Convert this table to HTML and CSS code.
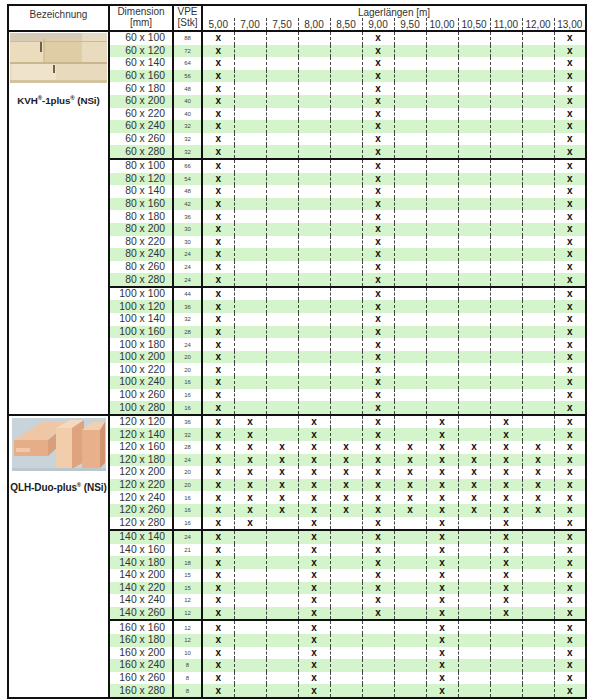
FILE: index.html
```html
<!DOCTYPE html>
<html lang="de">
<head>
<meta charset="utf-8">
<title>Lagerlängen</title>
<link rel="stylesheet" href="styles.css">
</head>
<body>
<table class="sheet">
<colgroup>
<col class="c-name"><col class="c-dim"><col class="c-vpe">
<col class="c-len"><col class="c-len"><col class="c-len"><col class="c-len"><col class="c-len"><col class="c-len">
<col class="c-len"><col class="c-len"><col class="c-len"><col class="c-len"><col class="c-len"><col class="c-len">
</colgroup>
<thead>
<tr class="h1">
<th rowspan="2" class="h-name">Bezeichnung</th>
<th rowspan="2" class="h-dim">Dimension<br>[mm]</th>
<th rowspan="2" class="h-vpe">VPE<br>[Stk]</th>
<th colspan="12" class="h-group">Lagerlängen [m]</th>
</tr>
<tr class="h2">
<th>5,00</th><th>7,00</th><th>7,50</th><th>8,00</th><th>8,50</th><th>9,00</th><th>9,50</th><th>10,00</th><th>10,50</th><th>11,00</th><th>12,00</th><th>13,00</th>
</tr>
</thead>
<tbody>
<tr>
<td rowspan="30" class="name">
<svg class="pic-kvh" width="97" height="50" viewBox="0 0 97 50">
<rect width="97" height="50" fill="#e3d7bb"/>
<rect x="0" y="0" width="97" height="8" fill="#d6ccb6"/>
<rect x="0" y="8" width="34" height="22" fill="#eadcbd"/>
<rect x="34" y="6" width="63" height="25" fill="#dfcda6"/>
<rect x="72" y="0" width="25" height="50" fill="#eee4cf" opacity="0.6"/>
<rect x="0" y="31" width="97" height="19" fill="#e8dbbd"/>
<rect x="2" y="31" width="44" height="16" fill="#efe4cb"/>
<rect x="0" y="29" width="97" height="2" fill="#c9b68f"/>
<rect x="0" y="47" width="97" height="3" fill="#d2c29f"/>
<rect x="0" y="8" width="97" height="1" fill="#cbbb98"/>
<line x1="31" y1="9" x2="31" y2="19" stroke="#3b2a12" stroke-width="1.4"/>
<line x1="44" y1="32" x2="44" y2="40" stroke="#3b2a12" stroke-width="1.4"/>
<line x1="34" y1="6" x2="34" y2="30" stroke="#c6b28b" stroke-width="1"/>
</svg>
<div class="label">KVH<sup>®</sup>-1plus<sup>®</sup> (NSi)</div>
</td>
<td class="d">60 x 100</td><td class="v">88</td><td>x</td><td></td><td></td><td></td><td></td><td>x</td><td></td><td></td><td></td><td></td><td></td><td>x</td></tr>
<tr><td class="d">60 x 120</td><td class="v">72</td><td>x</td><td></td><td></td><td></td><td></td><td>x</td><td></td><td></td><td></td><td></td><td></td><td>x</td></tr>
<tr><td class="d">60 x 140</td><td class="v">64</td><td>x</td><td></td><td></td><td></td><td></td><td>x</td><td></td><td></td><td></td><td></td><td></td><td>x</td></tr>
<tr><td class="d">60 x 160</td><td class="v">56</td><td>x</td><td></td><td></td><td></td><td></td><td>x</td><td></td><td></td><td></td><td></td><td></td><td>x</td></tr>
<tr><td class="d">60 x 180</td><td class="v">48</td><td>x</td><td></td><td></td><td></td><td></td><td>x</td><td></td><td></td><td></td><td></td><td></td><td>x</td></tr>
<tr><td class="d">60 x 200</td><td class="v">40</td><td>x</td><td></td><td></td><td></td><td></td><td>x</td><td></td><td></td><td></td><td></td><td></td><td>x</td></tr>
<tr><td class="d">60 x 220</td><td class="v">40</td><td>x</td><td></td><td></td><td></td><td></td><td>x</td><td></td><td></td><td></td><td></td><td></td><td>x</td></tr>
<tr><td class="d">60 x 240</td><td class="v">32</td><td>x</td><td></td><td></td><td></td><td></td><td>x</td><td></td><td></td><td></td><td></td><td></td><td>x</td></tr>
<tr><td class="d">60 x 260</td><td class="v">32</td><td>x</td><td></td><td></td><td></td><td></td><td>x</td><td></td><td></td><td></td><td></td><td></td><td>x</td></tr>
<tr><td class="d">60 x 280</td><td class="v">32</td><td>x</td><td></td><td></td><td></td><td></td><td>x</td><td></td><td></td><td></td><td></td><td></td><td>x</td></tr>
<tr class="gs"><td class="d">80 x 100</td><td class="v">66</td><td>x</td><td></td><td></td><td></td><td></td><td>x</td><td></td><td></td><td></td><td></td><td></td><td>x</td></tr>
<tr><td class="d">80 x 120</td><td class="v">54</td><td>x</td><td></td><td></td><td></td><td></td><td>x</td><td></td><td></td><td></td><td></td><td></td><td>x</td></tr>
<tr><td class="d">80 x 140</td><td class="v">48</td><td>x</td><td></td><td></td><td></td><td></td><td>x</td><td></td><td></td><td></td><td></td><td></td><td>x</td></tr>
<tr><td class="d">80 x 160</td><td class="v">42</td><td>x</td><td></td><td></td><td></td><td></td><td>x</td><td></td><td></td><td></td><td></td><td></td><td>x</td></tr>
<tr><td class="d">80 x 180</td><td class="v">36</td><td>x</td><td></td><td></td><td></td><td></td><td>x</td><td></td><td></td><td></td><td></td><td></td><td>x</td></tr>
<tr><td class="d">80 x 200</td><td class="v">30</td><td>x</td><td></td><td></td><td></td><td></td><td>x</td><td></td><td></td><td></td><td></td><td></td><td>x</td></tr>
<tr><td class="d">80 x 220</td><td class="v">30</td><td>x</td><td></td><td></td><td></td><td></td><td>x</td><td></td><td></td><td></td><td></td><td></td><td>x</td></tr>
<tr><td class="d">80 x 240</td><td class="v">24</td><td>x</td><td></td><td></td><td></td><td></td><td>x</td><td></td><td></td><td></td><td></td><td></td><td>x</td></tr>
<tr><td class="d">80 x 260</td><td class="v">24</td><td>x</td><td></td><td></td><td></td><td></td><td>x</td><td></td><td></td><td></td><td></td><td></td><td>x</td></tr>
<tr><td class="d">80 x 280</td><td class="v">24</td><td>x</td><td></td><td></td><td></td><td></td><td>x</td><td></td><td></td><td></td><td></td><td></td><td>x</td></tr>
<tr class="gs"><td class="d">100 x 100</td><td class="v">44</td><td>x</td><td></td><td></td><td></td><td></td><td>x</td><td></td><td></td><td></td><td></td><td></td><td>x</td></tr>
<tr><td class="d">100 x 120</td><td class="v">36</td><td>x</td><td></td><td></td><td></td><td></td><td>x</td><td></td><td></td><td></td><td></td><td></td><td>x</td></tr>
<tr><td class="d">100 x 140</td><td class="v">32</td><td>x</td><td></td><td></td><td></td><td></td><td>x</td><td></td><td></td><td></td><td></td><td></td><td>x</td></tr>
<tr><td class="d">100 x 160</td><td class="v">28</td><td>x</td><td></td><td></td><td></td><td></td><td>x</td><td></td><td></td><td></td><td></td><td></td><td>x</td></tr>
<tr><td class="d">100 x 180</td><td class="v">24</td><td>x</td><td></td><td></td><td></td><td></td><td>x</td><td></td><td></td><td></td><td></td><td></td><td>x</td></tr>
<tr><td class="d">100 x 200</td><td class="v">20</td><td>x</td><td></td><td></td><td></td><td></td><td>x</td><td></td><td></td><td></td><td></td><td></td><td>x</td></tr>
<tr><td class="d">100 x 220</td><td class="v">20</td><td>x</td><td></td><td></td><td></td><td></td><td>x</td><td></td><td></td><td></td><td></td><td></td><td>x</td></tr>
<tr><td class="d">100 x 240</td><td class="v">16</td><td>x</td><td></td><td></td><td></td><td></td><td>x</td><td></td><td></td><td></td><td></td><td></td><td>x</td></tr>
<tr><td class="d">100 x 260</td><td class="v">16</td><td>x</td><td></td><td></td><td></td><td></td><td>x</td><td></td><td></td><td></td><td></td><td></td><td>x</td></tr>
<tr><td class="d">100 x 280</td><td class="v">16</td><td>x</td><td></td><td></td><td></td><td></td><td>x</td><td></td><td></td><td></td><td></td><td></td><td>x</td></tr>
</tbody>
<tbody class="qlh">
<tr>
<td rowspan="22" class="name">
<svg class="pic-qlh" width="94" height="53" viewBox="0 0 94 53">
<rect width="94" height="53" fill="#c9d3da"/>
<polygon points="2,22 30,4 58,4 34,22" fill="#efc7a6"/>
<rect x="2" y="22" width="34" height="16" fill="#e5ad88"/>
<polygon points="36,22 58,4 58,18 36,38" fill="#d89f7b"/>
<rect x="4" y="30" width="14" height="4" fill="#f0c9a8"/>
<polygon points="44,10 58,2 72,2 60,10" fill="#f5d9be"/>
<rect x="44" y="10" width="16" height="41" fill="#f1cdac"/>
<polygon points="60,10 72,2 72,44 60,51" fill="#dfa47f"/>
<polygon points="70,12 80,4 93,4 88,12" fill="#f2cfb0"/>
<rect x="70" y="12" width="18" height="38" fill="#e8b18c"/>
<polygon points="88,12 93,4 93,45 88,50" fill="#d2936f"/>
<rect x="0" y="50" width="94" height="3" fill="#bcc6cd"/>
</svg>
<div class="label">QLH-Duo-plus<sup>®</sup> (NSi)</div>
</td>
<td class="d">120 x 120</td><td class="v">36</td><td>x</td><td>x</td><td></td><td>x</td><td></td><td>x</td><td></td><td>x</td><td></td><td>x</td><td></td><td>x</td></tr>
<tr><td class="d">120 x 140</td><td class="v">32</td><td>x</td><td>x</td><td></td><td>x</td><td></td><td>x</td><td></td><td>x</td><td></td><td>x</td><td></td><td>x</td></tr>
<tr><td class="d">120 x 160</td><td class="v">28</td><td>x</td><td>x</td><td>x</td><td>x</td><td>x</td><td>x</td><td>x</td><td>x</td><td>x</td><td>x</td><td>x</td><td>x</td></tr>
<tr><td class="d">120 x 180</td><td class="v">24</td><td>x</td><td>x</td><td>x</td><td>x</td><td>x</td><td>x</td><td>x</td><td>x</td><td>x</td><td>x</td><td>x</td><td>x</td></tr>
<tr><td class="d">120 x 200</td><td class="v">20</td><td>x</td><td>x</td><td>x</td><td>x</td><td>x</td><td>x</td><td>x</td><td>x</td><td>x</td><td>x</td><td>x</td><td>x</td></tr>
<tr><td class="d">120 x 220</td><td class="v">20</td><td>x</td><td>x</td><td>x</td><td>x</td><td>x</td><td>x</td><td>x</td><td>x</td><td>x</td><td>x</td><td>x</td><td>x</td></tr>
<tr><td class="d">120 x 240</td><td class="v">16</td><td>x</td><td>x</td><td>x</td><td>x</td><td>x</td><td>x</td><td>x</td><td>x</td><td>x</td><td>x</td><td>x</td><td>x</td></tr>
<tr><td class="d">120 x 260</td><td class="v">16</td><td>x</td><td>x</td><td>x</td><td>x</td><td>x</td><td>x</td><td>x</td><td>x</td><td>x</td><td>x</td><td>x</td><td>x</td></tr>
<tr><td class="d">120 x 280</td><td class="v">16</td><td>x</td><td>x</td><td></td><td>x</td><td></td><td>x</td><td></td><td>x</td><td></td><td>x</td><td></td><td>x</td></tr>
<tr class="gs"><td class="d">140 x 140</td><td class="v">24</td><td>x</td><td></td><td></td><td>x</td><td></td><td>x</td><td></td><td>x</td><td></td><td>x</td><td></td><td>x</td></tr>
<tr><td class="d">140 x 160</td><td class="v">21</td><td>x</td><td></td><td></td><td>x</td><td></td><td>x</td><td></td><td>x</td><td></td><td>x</td><td></td><td>x</td></tr>
<tr><td class="d">140 x 180</td><td class="v">18</td><td>x</td><td></td><td></td><td>x</td><td></td><td>x</td><td></td><td>x</td><td></td><td>x</td><td></td><td>x</td></tr>
<tr><td class="d">140 x 200</td><td class="v">15</td><td>x</td><td></td><td></td><td>x</td><td></td><td>x</td><td></td><td>x</td><td></td><td>x</td><td></td><td>x</td></tr>
<tr><td class="d">140 x 220</td><td class="v">15</td><td>x</td><td></td><td></td><td>x</td><td></td><td>x</td><td></td><td>x</td><td></td><td>x</td><td></td><td>x</td></tr>
<tr><td class="d">140 x 240</td><td class="v">12</td><td>x</td><td></td><td></td><td>x</td><td></td><td>x</td><td></td><td>x</td><td></td><td>x</td><td></td><td>x</td></tr>
<tr><td class="d">140 x 260</td><td class="v">12</td><td>x</td><td></td><td></td><td>x</td><td></td><td>x</td><td></td><td>x</td><td></td><td>x</td><td></td><td>x</td></tr>
<tr class="gs"><td class="d">160 x 160</td><td class="v">12</td><td>x</td><td></td><td></td><td>x</td><td></td><td></td><td></td><td>x</td><td></td><td></td><td></td><td>x</td></tr>
<tr><td class="d">160 x 180</td><td class="v">12</td><td>x</td><td></td><td></td><td>x</td><td></td><td></td><td></td><td>x</td><td></td><td></td><td></td><td>x</td></tr>
<tr><td class="d">160 x 200</td><td class="v">10</td><td>x</td><td></td><td></td><td>x</td><td></td><td></td><td></td><td>x</td><td></td><td></td><td></td><td>x</td></tr>
<tr><td class="d">160 x 240</td><td class="v">8</td><td>x</td><td></td><td></td><td>x</td><td></td><td></td><td></td><td>x</td><td></td><td></td><td></td><td>x</td></tr>
<tr><td class="d">160 x 260</td><td class="v">8</td><td>x</td><td></td><td></td><td>x</td><td></td><td></td><td></td><td>x</td><td></td><td></td><td></td><td>x</td></tr>
<tr><td class="d">160 x 280</td><td class="v">8</td><td>x</td><td></td><td></td><td>x</td><td></td><td></td><td></td><td>x</td><td></td><td></td><td></td><td>x</td></tr>
</tbody>
</table>
</body>
</html>
```
FILE: styles.css
```css
html, body {
  margin: 0;
  padding: 0;
  background: #fff;
}
body {
  font-family: "Liberation Sans", Arial, sans-serif;
  color: #222;
}
.sheet {
  border-collapse: collapse;
  table-layout: fixed;
  width: 579px;
  margin: 4px 0 0 7px;
  border: 2px solid #111;
}
.c-name { width: 101px; }
.c-dim { width: 64px; }
.c-vpe { width: 29px; }
.c-len { width: 32px; }

.sheet th {
  font-weight: normal;
  font-size: 10px;
  line-height: 11px;
  padding: 0;
  color: #333;
  white-space: nowrap;
}
.h-name, .h-dim, .h-vpe {
  vertical-align: top;
  padding-top: 2px;
  border-right: 2px solid #111;
  border-bottom: 2px solid #111;
}
.h-name { padding-top: 3px !important; }
.h-group {
  height: 12px;
  vertical-align: bottom;
  font-size: 9.6px;
}
.h2 th {
  height: 12px;
  vertical-align: bottom;
  border-left: 1px dashed #444;
  border-bottom: 2px solid #111;
}

.sheet td {
  padding: 0;
  height: 12.6px;
  line-height: 12px;
  text-align: center;
  font-weight: bold;
  font-size: 10px;
  color: #111;
  border-left: 1px dashed #444;
  white-space: nowrap;
}
.sheet tr:nth-child(even) td {
  background: #d4f5cc;
}
.sheet td.d {
  text-align: right;
  padding-right: 7px;
  font-weight: normal;
  font-size: 10.4px;
  color: #333;
  border-left: 2px solid #111;
  border-right: 2px solid #111;
}
.sheet td.v {
  font-weight: normal;
  font-size: 6px;
  color: #444;
  border-right: 2px solid #111;
}
.sheet tr.gs td {
  border-top: 2px solid #111;
}
.sheet tbody.qlh tr:first-child td {
  border-top: 2px solid #111;
}
.sheet td.name {
  vertical-align: top;
  background: #fff;
  border-right: 2px solid #111;
  padding: 0;
  font-weight: bold;
}
.pic-kvh {
  display: block;
  margin: 1px auto 0;
}
.pic-qlh {
  display: block;
  margin: 2px auto 0;
}
.label {
  font-size: 10px;
  line-height: 12px;
  color: #1a1a1a;
  letter-spacing: -0.1px;
}
.pic-kvh + .label { margin-top: 12px; font-size: 9.8px; }
.pic-qlh + .label { margin-top: 11px; }
.label sup {
  font-size: 6px;
  vertical-align: 4px;
  line-height: 0;
}
```
